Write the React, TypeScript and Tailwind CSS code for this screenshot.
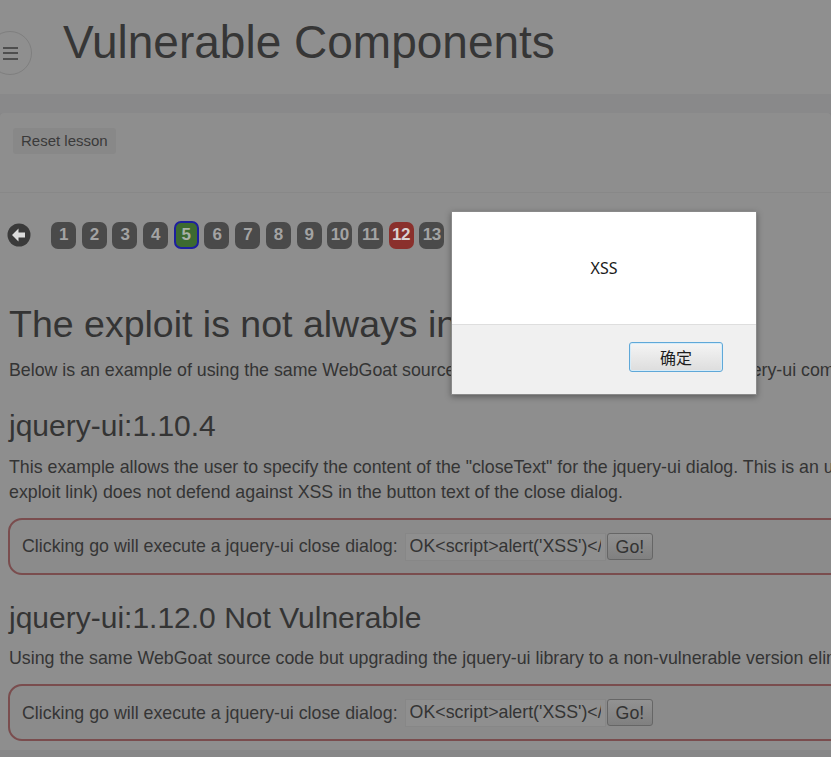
import React from "react";

const pages = ["1", "2", "3", "4", "5", "6", "7", "8", "9", "10", "11", "12", "13"];

const PageButton = ({ label }: { label: string }) => {
	if (label === "5") {
		return (
			<div className="w-[25px] h-[28px] rounded-[7px] border-2 border-[#1d1f9e] bg-[#3d6a30] flex items-center justify-center text-[17px] font-bold text-[#a9b0a6]">
				{label}
			</div>
		);
	}
	if (label === "12") {
		return (
			<div className="w-[25px] h-[27px] rounded-[7px] bg-[#8a302c] flex items-center justify-center text-[17px] font-bold tracking-[-0.5px] text-[#d9d2d2]">
				{label}
			</div>
		);
	}
	return (
		<div className="w-[25px] h-[27px] rounded-[7px] bg-[#4a4a4a] flex items-center justify-center text-[17px] font-bold tracking-[-0.5px] text-[#a3a3a3]">
			{label}
		</div>
	);
};

const ExploitBox = () => (
	<div className="w-[1200px] h-[57px] rounded-[14px] border-2 border-[#7a4d4e] bg-[#8b8b8b] flex items-center pl-[12px]">
		<span className="text-[17.8px] text-[#353535]">
			Clicking go will execute a jquery-ui close dialog:
		</span>
		<input
			readOnly
			defaultValue="OK<script>alert('XSS')</script>"
			className="ml-[7px] w-[201px] h-[28px] px-[4px] bg-[#8f8f8f] border border-[#878787] text-[17.8px] text-[#343434] outline-none font-['Liberation_Sans',Arial,sans-serif]"
		/>
		<button className="ml-[1px] h-[27px] px-[8px] rounded-[3px] border border-[#666666] bg-gradient-to-b from-[#929292] to-[#808080] text-[17.8px] text-[#333333]">
			Go!
		</button>
	</div>
);

export default function App() {
	return (
		<div className="relative w-[831px] h-[757px] overflow-hidden bg-[#878788] font-['Liberation_Sans',Arial,sans-serif] text-[#343434]">
			{/* header */}
			<div className="h-[94px] bg-[#8f8f8f] flex items-start">
				<div className="-ml-[12px] mt-[31px] w-[44px] h-[44px] rounded-full border border-[#7f7f7f] flex flex-col items-center justify-center gap-[3.5px]">
					<div className="w-[15px] h-[2px] bg-[#4e4e4e]" />
					<div className="w-[15px] h-[2px] bg-[#4e4e4e]" />
					<div className="w-[15px] h-[2px] bg-[#4e4e4e]" />
				</div>
				<h1 className="ml-[31px] mt-[19px] text-[46px] leading-none text-[#363636]">
					Vulnerable Components
				</h1>
			</div>

			<div className="h-[19px] bg-[#89898a]" />

			{/* lesson panel */}
			<div className="h-[637px] bg-[#8e8e8e] rounded-t-[4px]">
				<div className="h-[80px] border-b border-[#888888] pl-[13px] pt-[15px]">
					<button className="h-[26px] px-[8px] rounded-[3px] bg-[#888888] text-[15px] text-[#3a3a3a]">
						Reset lesson
					</button>
				</div>

				<div className="mt-[28px] pl-[7px] flex items-center">
					<svg width="24" height="24" viewBox="0 0 24 24">
						<circle cx="12" cy="12" r="11.5" fill="#3a3a3a" />
						<path d="M5 12 L11.5 5.5 L11.5 9.5 L18 9.5 L18 14.5 L11.5 14.5 L11.5 18.5 Z" fill="#dcdcdc" />
					</svg>
					<div className="ml-[20px] flex items-center gap-[5.7px]">
						{pages.map((p) => (
							<PageButton key={p} label={p} />
						))}
					</div>
				</div>

				<div className="px-[9px]">
					<h2 className="mt-[55px] text-[37.5px] leading-[1.1]">
						The exploit is not always in "your" code
					</h2>
					<p className="mt-[13px] text-[17.8px] leading-[25.4px] whitespace-nowrap">
						Below is an example of using the same WebGoat source code, but different versions of the jquery-ui component. One is exploitable; one is not.
					</p>
					<h3 className="mt-[25.4px] text-[30px] leading-[1.1]">jquery-ui:1.10.4</h3>
					<p className="mt-[12.7px] text-[17.8px] leading-[25.4px] whitespace-nowrap">
						This example allows the user to specify the content of the "closeText" for the jquery-ui dialog. This is an unlikely development scenario, however the jquery-ui dialog (TODO: show
						<br />
						exploit link) does not defend against XSS in the button text of the close dialog.
					</p>
					<div className="mt-[12.7px] -ml-[1px]">
						<ExploitBox />
					</div>
					<h3 className="mt-[25.4px] text-[30px] leading-[1.1]">
						jquery-ui:1.12.0 Not Vulnerable
					</h3>
					<p className="mt-[12.7px] text-[17.8px] leading-[25.4px] whitespace-nowrap">
						Using the same WebGoat source code but upgrading the jquery-ui library to a non-vulnerable version eliminates the exploit.
					</p>
					<div className="mt-[12.7px] -ml-[1px]">
						<ExploitBox />
					</div>
				</div>
			</div>

			{/* alert dialog */}
			<div className="absolute left-[451px] top-[211px] w-[306px] border border-[#8a8a8a] shadow-[0_2px_6px_rgba(0,0,0,0.35)] font-['Noto_Sans','Noto_Sans_CJK_SC',sans-serif]">
				<div className="h-[112px] bg-white flex items-center justify-center text-[16px] text-[#1a1a1a]">
					XSS
				</div>
				<div className="h-[70px] bg-[#f0f0f0] border-t border-[#dedede] flex justify-end pt-[17px] pr-[33px]">
					<button className="w-[94px] h-[30px] rounded-[3px] border border-[#5fa8d8] bg-gradient-to-b from-[#f5f5f5] to-[#dddddd] text-[16px] text-[#1e1e1e] font-['Noto_Sans_CJK_SC',sans-serif] shadow-[inset_0_0_0_1px_#d6ecf9]">
						确定
					</button>
				</div>
			</div>
		</div>
	);
}
